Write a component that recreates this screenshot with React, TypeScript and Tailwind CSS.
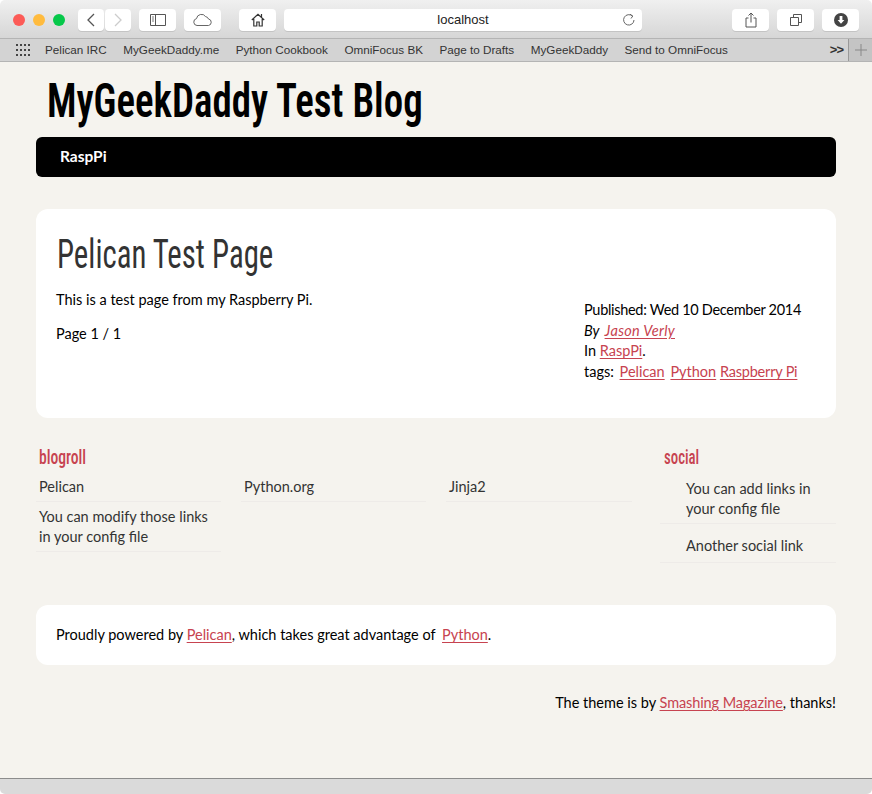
import type { ReactNode } from "react";

const bookmarks = [
  "Pelican IRC",
  "MyGeekDaddy.me",
  "Python Cookbook",
  "OmniFocus BK",
  "Page to Drafts",
  "MyGeekDaddy",
  "Send to OmniFocus",
];

const headingFont = "inline-block origin-left [font-family:'Roboto_Condensed','Liberation_Sans',sans-serif]";

function ToolButton({ className, children }: { className: string; children: ReactNode }) {
  return (
    <div className={`h-[22px] bg-white rounded-[4px] shadow-[0_1px_0_#c4c4c4] flex items-center justify-center ${className}`}>
      {children}
    </div>
  );
}

function Toolbar() {
  return (
    <div className="h-[38px] bg-linear-to-b from-[#f0f0f0] to-[#d6d6d6] flex items-center pt-[1px] rounded-t-[5px]">
      <div className="flex gap-[8px] ml-[13px] w-[65px]">
        <span className="size-[12px] rounded-full bg-[#fc5b57]"></span>
        <span className="size-[12px] rounded-full bg-[#ffbb3e]"></span>
        <span className="size-[12px] rounded-full bg-[#06c84a]"></span>
      </div>
      <ToolButton className="w-[26px]">
        <svg width="10" height="14" viewBox="0 0 10 14" fill="none" stroke="#555" strokeWidth="1.3">
          <path d="M8 1 2 7l6 6" />
        </svg>
      </ToolButton>
      <ToolButton className="w-[26px] ml-[1px]">
        <svg width="10" height="14" viewBox="0 0 10 14" fill="none" stroke="#ccc" strokeWidth="1.3">
          <path d="m2 1 6 6-6 6" />
        </svg>
      </ToolButton>
      <ToolButton className="w-[37px] ml-[8px]">
        <svg width="16" height="12" viewBox="0 0 16 12" fill="none" stroke="#555">
          <path d="M.5.5h15v11H.5zM5.500.5v11" />
          <path d="M2 3h2M2 5h2M2 7h2" strokeWidth=".8" />
        </svg>
      </ToolButton>
      <ToolButton className="w-[37px] ml-[8px]">
        <svg width="20" height="13" viewBox="0 0 20 13" fill="none" stroke="#555" strokeWidth=".9">
          <path d="M5 12.500H4a3.500 3.500 0 0 1-.5-6.900A5 5 0 0 1 12.600 3.600 3.600 3.600 0 0 1 15.500 6 3.300 3.300 0 0 1 15.500 12.500Z" />
        </svg>
      </ToolButton>
      <ToolButton className="w-[37px] ml-[18px]">
        <svg width="14" height="14" viewBox="0 0 14 14" fill="none" stroke="#333" strokeWidth="1.2">
          <path d="M.8 7 7 1.200 13.200 7M2.800 6v7h3V9h2.400v4h3V6M10.500 1v3" />
        </svg>
      </ToolButton>
      <ToolButton className="w-[358px] ml-[8px] relative text-[13px] text-[#222] [font-family:'Liberation_Sans',sans-serif]">
        localhost
        <svg className="absolute right-[6px] top-[4px]" width="14" height="14" viewBox="0 0 14 14" fill="none" stroke="#666">
          <path d="M10.500 3.200A5.200 5.200 0 1 0 12 7" />
          <path d="M8 1.200 10.800 3 9 5.500" />
        </svg>
      </ToolButton>
      <ToolButton className="w-[37px] ml-[90px]">
        <svg width="12" height="16" viewBox="0 0 12 16" fill="none" stroke="#555">
          <path d="M3.500 6H1v9h10V6H8.500M6 10.500V1M3.500 3.500 6 1l2.500 2.500" />
        </svg>
      </ToolButton>
      <ToolButton className="w-[37px] ml-[8px]">
        <svg width="12" height="12" viewBox="0 0 12 12" fill="none" stroke="#555">
          <path d="M3.500 3V.5h8v8H8.500M.5 3.500h8v8h-8z" />
        </svg>
      </ToolButton>
      <ToolButton className="w-[37px] ml-[8px]">
        <svg width="14" height="14" viewBox="0 0 14 14">
          <circle cx="7" cy="7" r="7" fill="#444" />
          <path d="M5.600 3h2.800v4h2L7 10.800 3.600 7h2z" fill="#fff" />
        </svg>
      </ToolButton>
    </div>
  );
}

function BookmarksBar() {
  return (
    <div className="h-[24px] bg-[#d3d3d3] border-t border-b border-[#b4b4b4] flex items-center text-[11.700px] text-[#333] [font-family:'Liberation_Sans',sans-serif]">
      <svg className="ml-[16px]" width="14" height="12" viewBox="0 0 14 12" fill="#444">
        <path d="M0 0h2v2H0zM4 0h2v2H4zM8 0h2v2H8zM12 0h2v2h-2zM0 5h2v2H0zM4 5h2v2H4zM8 5h2v2H8zM12 5h2v2h-2zM0 10h2v2H0zM4 10h2v2H4zM8 10h2v2H8zM12 10h2v2h-2z" />
      </svg>
      <div className="flex gap-[16.500px] ml-[15px]">
        {bookmarks.map((b) => (
          <span key={b}>{b}</span>
        ))}
      </div>
      <span className="ml-auto mr-[5px] text-[13px] font-bold tracking-[-1px]">&gt;&gt;</span>
      <div className="w-[24px] h-full bg-[#c4c4c4] border-l border-[#999] flex items-center justify-center">
        <svg width="12" height="12" viewBox="0 0 12 12" stroke="#888">
          <path d="M6 0v12M0 6h12" />
        </svg>
      </div>
    </div>
  );
}

function LinkItem({ className, children }: { className: string; children: ReactNode }) {
  return <li className={`border-b border-[#eeebe8] leading-[20px] ${className}`}>{children}</li>;
}

function App() {
  const link = "text-[#c74350] underline underline-offset-2";
  return (
    <div className="w-[872px] h-[794px] bg-white overflow-hidden flex flex-col text-[14.500px] text-black [font-family:'Lato',sans-serif]">
      <Toolbar />
      <BookmarksBar />
      <main className="flex-1 bg-[#f5f3ee] px-[36px]">
        <h1 className="pl-[11px] pt-[6px] h-[75px] leading-[66px]">
          <span className={`text-[49px] font-semibold scale-x-[0.795] ${headingFont}`}>MyGeekDaddy Test Blog</span>
        </h1>
        <nav className="h-[40px] bg-black rounded-[6px] pl-[24px] flex items-center text-white font-bold text-[15.500px]">
          RaspPi
        </nav>
        <article className="mt-[32px] h-[209px] bg-white rounded-[12px] pl-[20px] pr-[21px] pt-[22px]">
          <h2 className="pl-[1px] leading-[48px]">
            <span className={`text-[40px] text-[#333] scale-x-[0.77] ${headingFont}`}>Pelican Test Page</span>
          </h2>
          <div className="flex justify-between">
            <div className="pt-[3px]">
              <p className="leading-[20px]">This is a test page from my Raspberry Pi.</p>
              <p className="leading-[20px] mt-[14px]">Page 1 / 1</p>
            </div>
            <footer className="w-[231px] pt-[13px] leading-[20.670px]">
              <div className="tracking-[-0.3px]">Published: Wed 10 December 2014</div>
              <div className="italic">
                By <a className={`${link} ml-[2px] tracking-[0.3px]`}>Jason Verly</a>
              </div>
              <div>
                In <a className={link}>RaspPi</a>.
              </div>
              <div>
                tags: <a className={`${link} ml-[2px]`}>Pelican</a> <a className={`${link} ml-[2px]`}>Python</a>{" "}
                <a className={`${link} tracking-[-0.2px]`}>Raspberry Pi</a>
              </div>
            </footer>
          </div>
        </article>
        <section className="mt-[25px] h-[162px] flex justify-between text-[#333]">
          <div>
            <h3 className="pl-[3px] leading-[28px]">
              <span className={`text-[20px] font-medium text-[#c74350] scale-x-[0.78] ${headingFont}`}>blogroll</span>
            </h3>
            <ul className="grid grid-cols-[185px_185px_186px] gap-x-[20px] mt-[4px] items-start">
              <LinkItem className="pl-[3px] pb-[4px]">Pelican</LinkItem>
              <LinkItem className="pl-[3px] pb-[4px]">Python.org</LinkItem>
              <LinkItem className="pl-[3px] pb-[4px]">Jinja2</LinkItem>
              <LinkItem className="pl-[3px] pt-[5px] pb-[4px]">
                You can modify those links
                <br />
                in your config file
              </LinkItem>
            </ul>
          </div>
          <div className="w-[176px]">
            <h3 className="pl-[4px] leading-[28px]">
              <span className={`text-[20px] font-medium text-[#c74350] scale-x-[0.74] ${headingFont}`}>social</span>
            </h3>
            <ul className="mt-[6px]">
              <LinkItem className="pl-[26px] pb-[4px]">
                You can add links in
                <br />
                your config file
              </LinkItem>
              <LinkItem className="pl-[26px] pt-[12px] pb-[6px]">Another social link</LinkItem>
            </ul>
          </div>
        </section>
        <section className="h-[60px] bg-white rounded-[12px] pl-[20px] flex items-center">
          <p>
            Proudly powered by <a className={link}>Pelican</a>, which takes great advantage of{" "}
            <a className={`${link} ml-[3px]`}>Python</a>.
          </p>
        </section>
        <p className="mt-[28px] text-right leading-[20px]">
          The theme is by <a className={`${link} tracking-[-0.1px]`}>Smashing Magazine</a>, thanks!
        </p>
      </main>
      <div className="h-[16px] bg-[#dadada] border-t border-[#8c8c8c] rounded-b-[5px]"></div>
    </div>
  );
}

export default App;
